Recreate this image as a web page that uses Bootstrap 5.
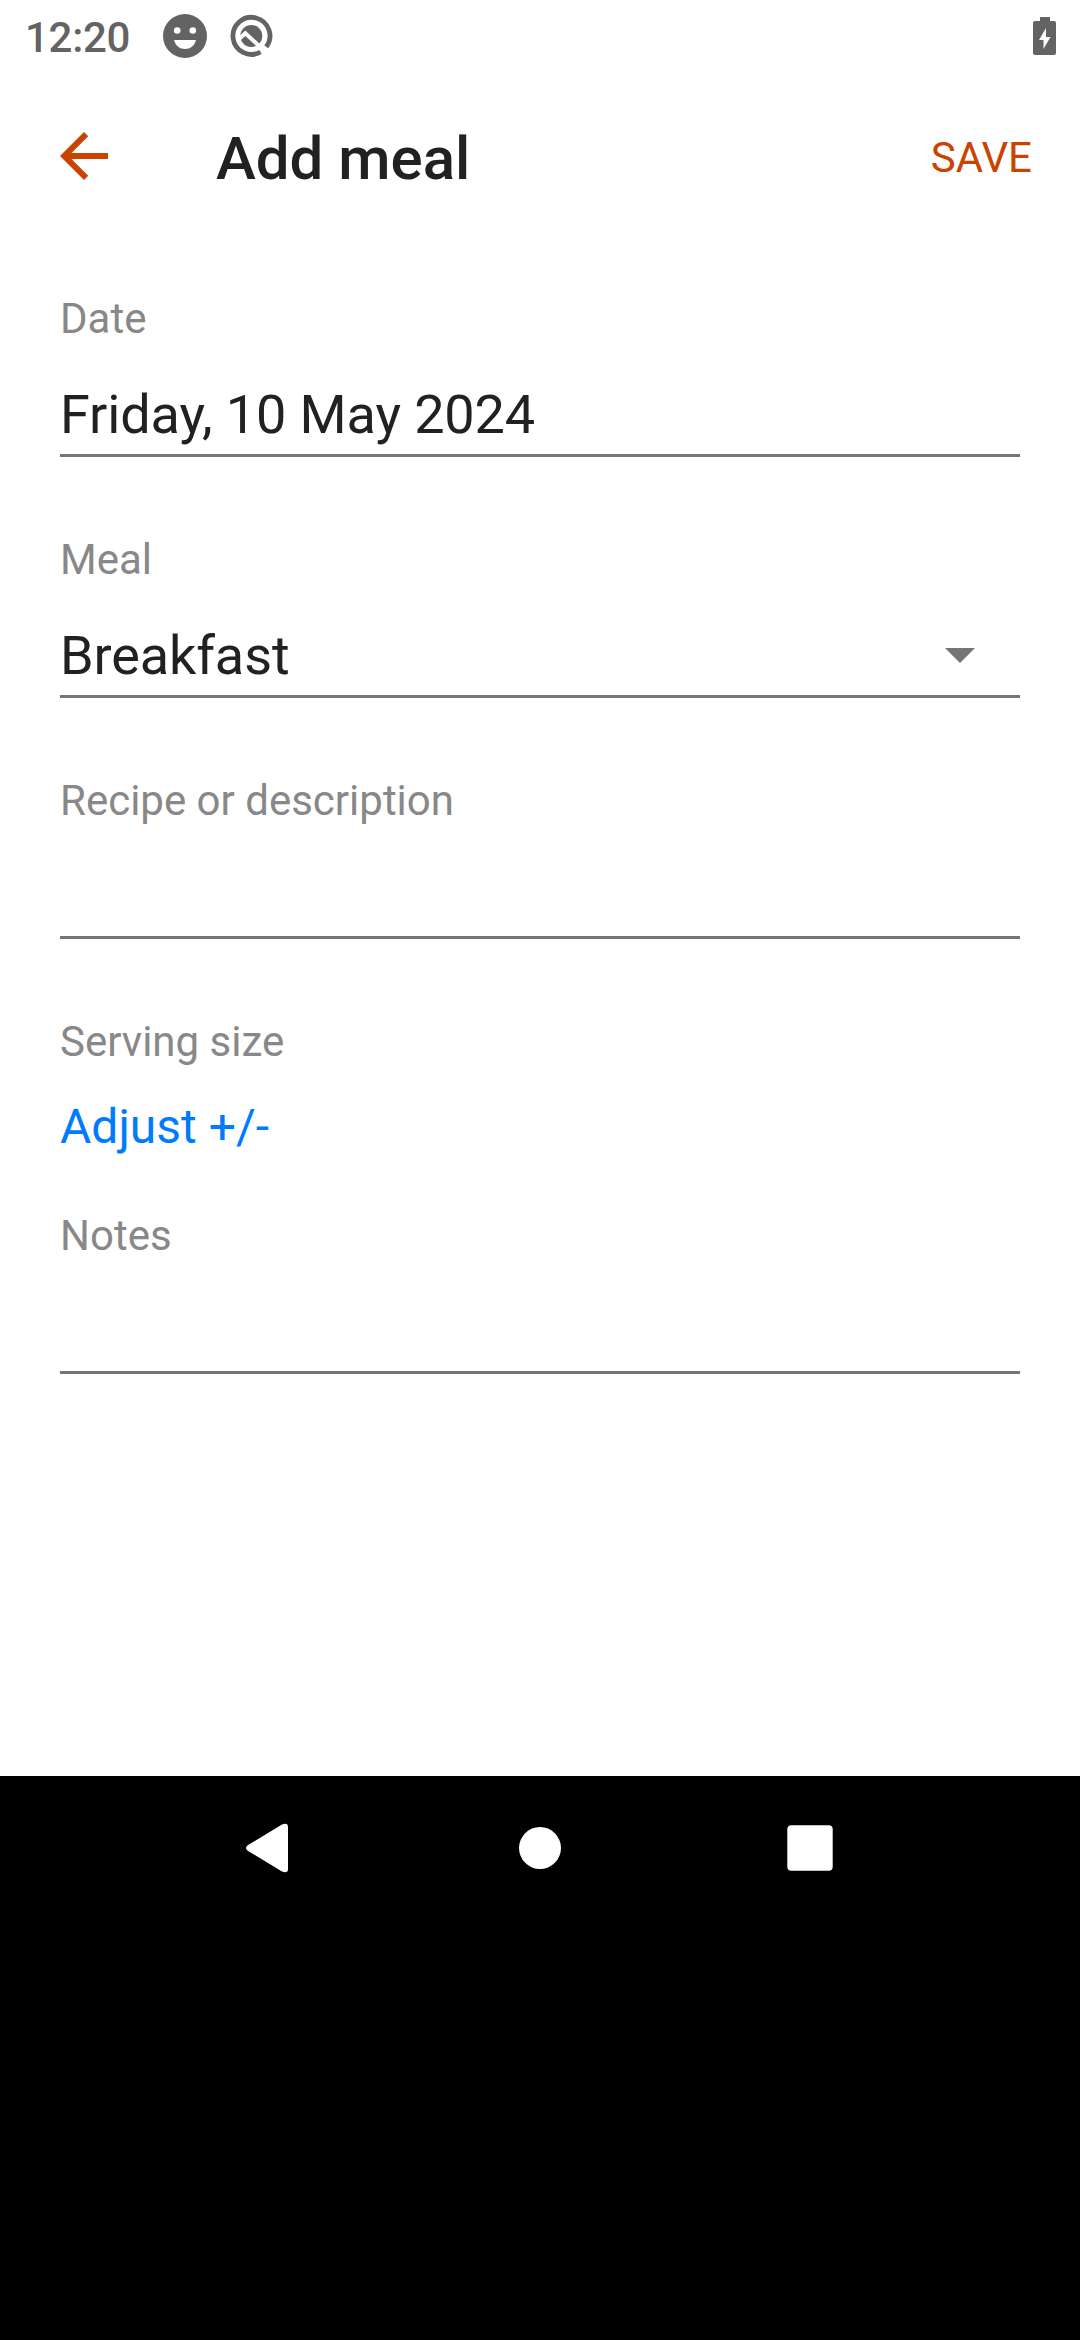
<!DOCTYPE html>
<html lang="en">
<head>
<meta charset="utf-8">
<title>Add meal</title>
<link href="https://cdn.jsdelivr.net/npm/bootstrap@5.3.0/dist/css/bootstrap.min.css" rel="stylesheet">
<style>
body{font-family:Roboto,sans-serif;color:#212121;width:1080px;height:2340px;overflow:hidden;background:#fff}
svg{display:block;flex:none}
.status{height:72px;padding:0 23px 0 25px;color:#636363}
.clock{font-size:42px;font-weight:500;line-height:50px;width:136px;padding-top:3px;letter-spacing:-.3px}
.topbar{height:168px;padding:0 48px}
.heading{font-size:60px;font-weight:500;line-height:72px;margin-left:96px;padding-top:5px}
.save{font-size:42px;color:#ca4300;line-height:50px;text-decoration:none;padding-top:3px}
.form-area{height:1536px;padding:54px 60px 0}
.cap{font-size:42px;line-height:50px;color:#888}
.field{height:241px}
.line-box{height:113px;border-bottom:3px solid #757575;font-size:54px;line-height:64px;padding:39px 45px 0 0;letter-spacing:-.12px}
.caret{margin-top:24px}
.adjust{font-size:48px;line-height:56px;color:#007bff;text-decoration:none;margin-top:32px}
.serving{height:194px}
.navkeys{height:564px;background:#000;padding:36px 234px 0}
</style>
</head>
<body class="d-flex flex-column">
<header class="status d-flex align-items-center">
  <span class="clock">12:20</span>
  <svg width="48" height="48" viewBox="0 0 48 48"><circle cx="24" cy="24" r="22" fill="#636363"/><g fill="#fff"><circle cx="16.2" cy="18.5" r="3.3"/><circle cx="31.8" cy="18.5" r="3.3"/><path d="M13 28H35C33.5 34 29 37 24 37S14.500 34 13 28Z"/></g></svg>
  <svg class="ms-3" width="54" height="54" viewBox="0 0 54 54"><path d="M41.300 37.900A18.500 18.500 0 1 0 35.500 43" fill="none" stroke="#636363" stroke-width="4.800"/><circle cx="26.300" cy="27" r="11" fill="#636363"/><path d="M13.500 30.500L20.300 24.300L38 40.500" fill="none" stroke="#fff" stroke-width="4"/></svg>
  <svg class="ms-auto" width="24" height="38" viewBox="0 0 24 38"><path fill="#636363" d="M7 0h10v4h4q2 0 2 2v30q0 2-2 2H2q-2 0-2-2V6q0-2 2-2h5z"/><path fill="#fff" d="M13 11v9h4.500L10.500 32V23H6z"/></svg>
</header>
<nav class="topbar d-flex align-items-center">
  <svg width="72" height="72" viewBox="0 0 24 24"><path fill="#ca4300" d="M20 11H7.830l5.590-5.590L12 4l-8 8 8 8 1.410-1.410L7.830 13H20z"/></svg>
  <h1 class="heading mb-0">Add meal</h1>
  <a class="save ms-auto">SAVE</a>
</nav>
<main class="form-area">
  <div class="field"><div class="cap">Date</div><div class="line-box">Friday, 10 May 2024</div></div>
  <div class="field"><div class="cap">Meal</div><div class="line-box d-flex justify-content-between align-items-start"><span>Breakfast</span><svg class="caret" width="30" height="15" viewBox="0 0 30 15"><path fill="#757575" d="M0 0H30L15 15Z"/></svg></div></div>
  <div class="field"><div class="cap">Recipe or description</div><div class="line-box"></div></div>
  <div class="serving d-flex flex-column"><div class="cap">Serving size</div><a class="adjust">Adjust +/-</a></div>
  <div class="field"><div class="cap">Notes</div><div class="line-box"></div></div>
</main>
<footer class="navkeys d-flex justify-content-between align-items-start">
  <svg width="72" height="72" viewBox="0 0 72 72"><path fill="#fff" d="M14 33L48 12.500Q54 10 54 15V57Q54 62 48 59.500L14 39Q10 36 14 33Z"/></svg>
  <svg width="72" height="72" viewBox="0 0 72 72"><circle cx="36" cy="36" r="21" fill="#fff"/></svg>
  <svg width="72" height="72" viewBox="0 0 72 72"><rect x="13.300" y="13.300" width="45.400" height="45.400" rx="4" fill="#fff"/></svg>
</footer>
<script src="https://cdn.jsdelivr.net/npm/bootstrap@5.3.0/dist/js/bootstrap.bundle.min.js"></script>
</body>
</html>
